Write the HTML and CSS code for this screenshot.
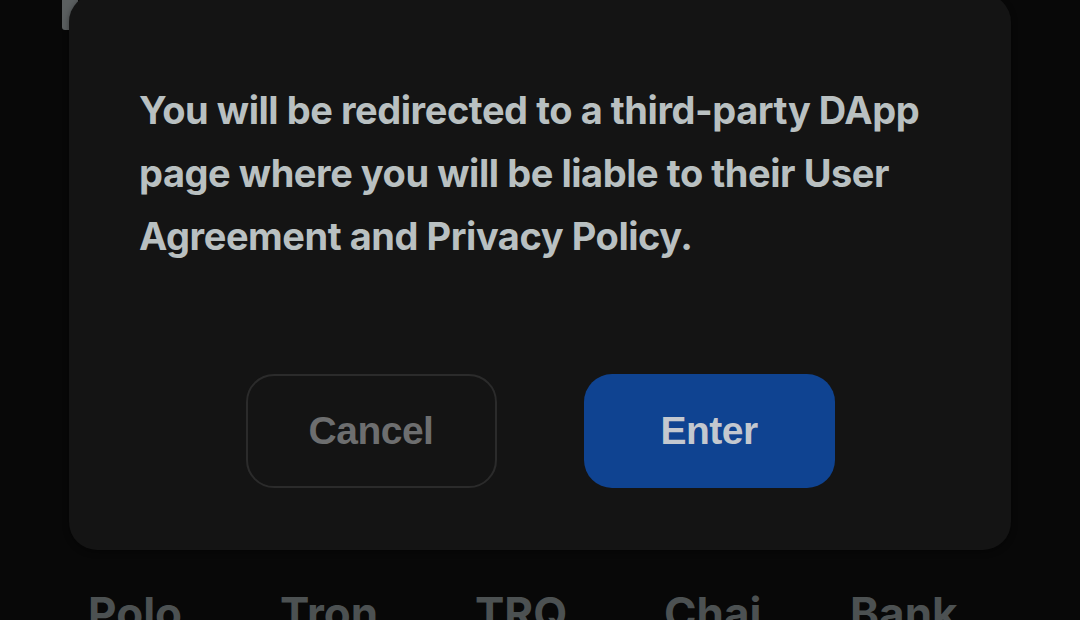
FILE: index.html
```html
<!doctype html>
<html>
  <head>
    <title>Open DApp</title>
    <link rel="stylesheet" href="styles.css">
  </head>
  <body>
    <div class="page">
      <!-- Content behind the dialog -->
      <span class="peek"></span>

      <div class="dialog">
        <p class="message">
          You will be redirected to a third-party DApp page where you will be
          liable to their User Agreement and Privacy Policy.
        </p>

        <div class="actions">
          <button class="btn btn-cancel">Cancel</button>
          <button class="btn btn-enter">Enter</button>
        </div>
      </div>

      <div class="dapps">
        <span>Polo</span>
        <span>Tron</span>
        <span>TRQ</span>
        <span>Chai</span>
        <span>Bank</span>
      </div>
    </div>
  </body>
</html>
```

FILE: styles.css
```css
:root {
  --background: #080808;
  --card-background: #141414;
  --text-color: #b9c0c1;
  --muted: #6d6e6f;
  --primary-color: #0f4391;
  --border-color: #2b2b2b;
}

html,
body {
  margin: 0;
  height: 100%;
}

body {
  font-family: Inter, "Noto Sans", sans-serif;
  background-color: var(--background);
  color: var(--text-color);
  overflow: hidden;
}

.page {
  position: relative;
  height: 620px;
  padding-left: 69px;
}

.peek {
  position: absolute;
  left: 62px;
  top: -10px;
  width: 16px;
  height: 46px;
  border-radius: 3px;
  background-color: #5b5f60;
}

.dialog {
  position: relative;
  width: 942px;
  margin-top: -6px;
  padding: 85px 60px 62px 70px;
  box-sizing: border-box;
  background-color: var(--card-background);
  border-radius: 28px;
  box-shadow: 0 2px 6px rgba(0, 0, 0, 0.4);
}

.message {
  margin: 0;
  font-size: 38px;
  font-weight: 700;
  line-height: 63px;
  letter-spacing: -0.45px;
  color: var(--text-color);
}

.actions {
  display: flex;
  justify-content: center;
  gap: 87px;
  margin-top: 106px;
  margin-right: 10px;
}

.btn {
  width: 251px;
  height: 114px;
  border-radius: 28px;
  font-family: "Liberation Sans", Arial, sans-serif;
  font-size: 39px;
  font-weight: 700;
  letter-spacing: -0.5px;
  cursor: pointer;
}

.btn-cancel {
  background-color: transparent;
  border: 2px solid var(--border-color);
  color: var(--muted);
}

.btn-enter {
  background-color: var(--primary-color);
  border: none;
  color: #c3c8cf;
}

.dapps {
  display: grid;
  grid-template-columns: 192px 195px 189px 186px auto;
  margin-top: 38px;
  margin-left: 19px;
  font-size: 44px;
  font-weight: 700;
  line-height: 50px;
  color: #4c5152;
}
```
